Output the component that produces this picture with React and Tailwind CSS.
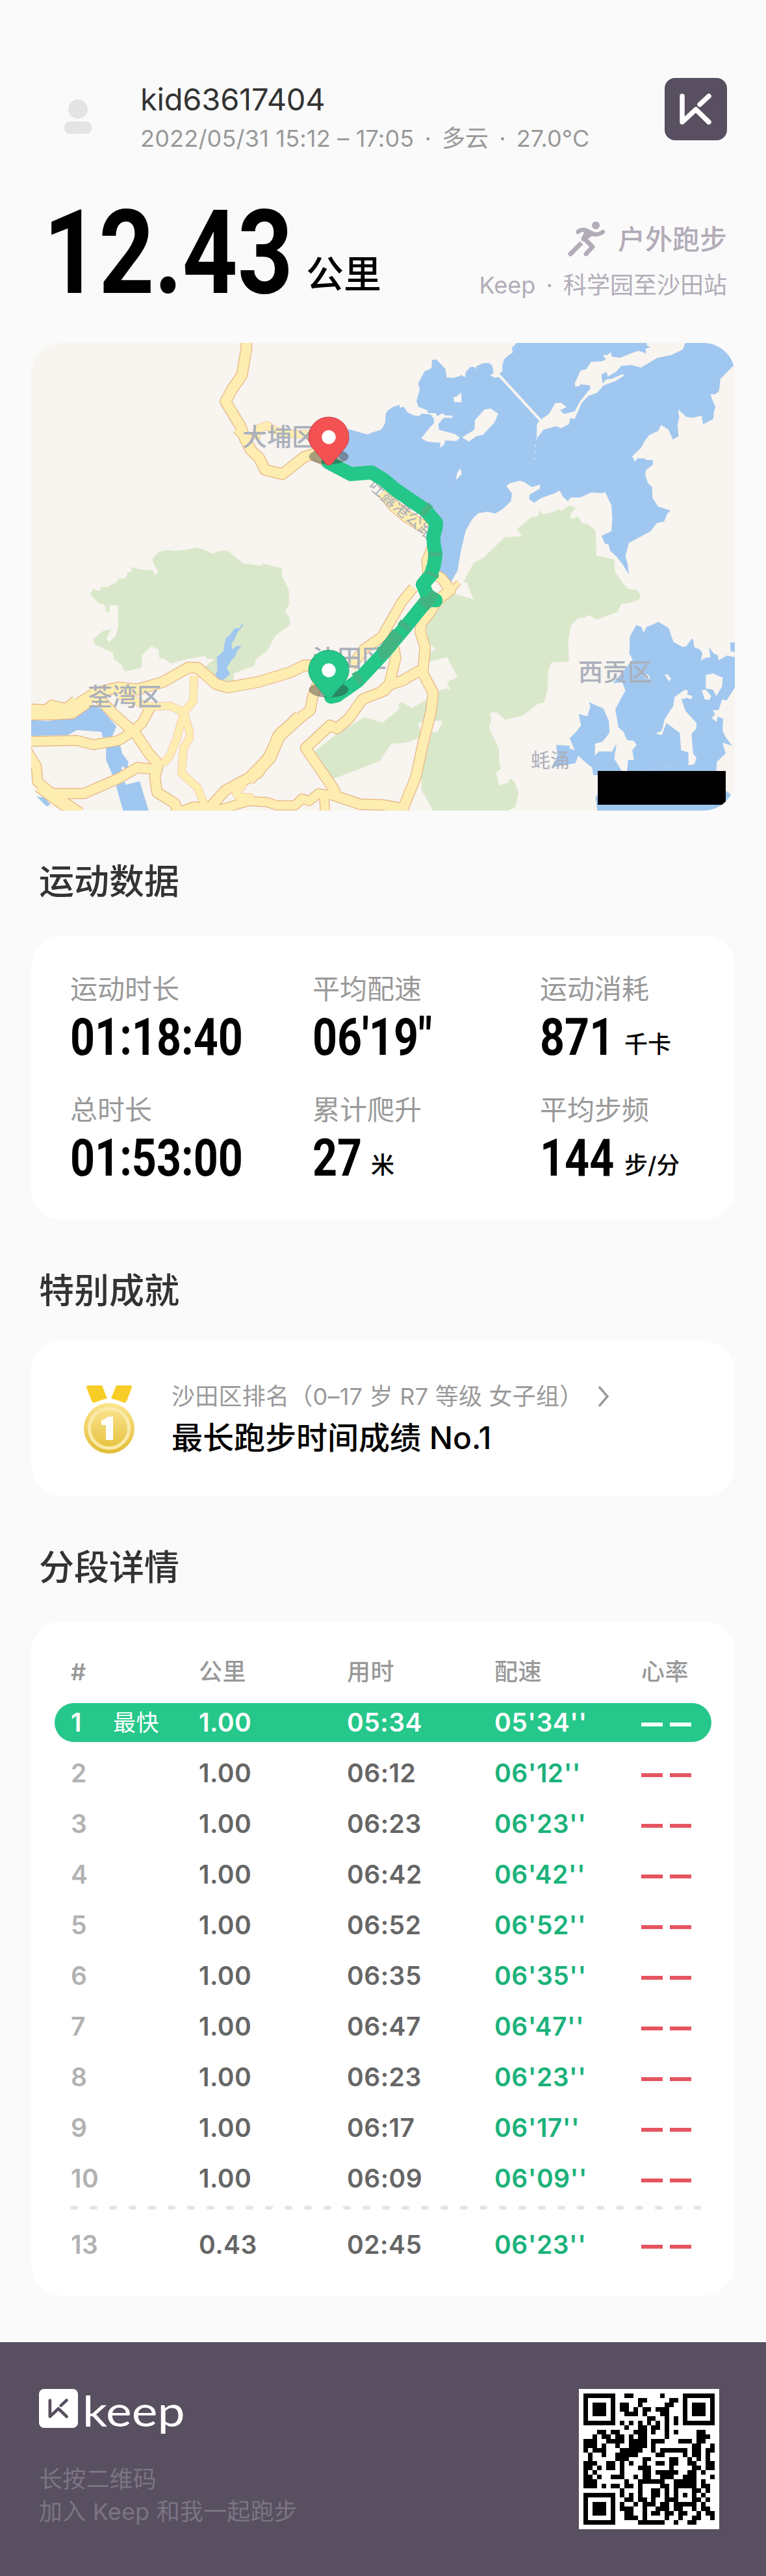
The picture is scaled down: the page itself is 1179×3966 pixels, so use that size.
const TILES = { a: [-8, -8], b: [542, -8], c: [-8, 352], d: [542, 352] };

// Converts sheet coordinates (one sheet per map quadrant) to a single path.
function trace(...parts) {
  const out = [];
  for (let i = 0; i < parts.length; i += 2) {
    const [ox, oy] = TILES[parts[i]];
    for (const pair of parts[i + 1].trim().split(/\s+/)) {
      const [x, y] = pair.split(",").map(Number);
      out.push(`${(ox + x / 2.8).toFixed(1)} ${(oy + y / 3).toFixed(1)}`);
    }
  }
  return "M" + out.join("L");
}

const WATER = [
  trace(
    "b", "570,20 570,30 555,45 557,70 540,80 520,100 513,130 513,155 500,165 508,180 480,185 460,172 475,165 470,130 455,116 430,118 400,132 398,147 393,135 375,135 355,160 352,182 335,172 328,178 300,185 273,183 268,145 228,100 210,103 208,140 178,155 150,210 157,240 143,290 150,318 190,335 192,348 225,348 232,362 255,348 265,358 298,360 298,370 260,370 237,400 240,425 310,445 330,462 315,477 265,475 262,495 243,508 247,485 190,480 163,465 200,415 218,395 218,375 205,355 165,350 155,362 130,358 105,345 88,318 70,324 70,310 40,320 20,335 10,350 8,390 0,410",
    "a", "1530,425 1500,435 1470,446 1390,422 1360,450 1340,520 1350,555 1400,600 1490,595",
    "b", "0,625 40,660 200,800 250,850 240,900 250,1000 235,1080 290,1132 320,1075 335,980 355,890 385,835 410,810 450,803 480,812 510,795 550,755 555,720 530,685 545,672 590,660 610,668 640,690 675,678 675,697 630,725 628,745 650,762 680,740 735,720 760,706 775,735 795,755 808,737 848,738 895,715 945,718 955,712 970,745 983,775 987,830 983,893 940,915 955,950 970,955 978,985 1005,1010 1030,1045 1058,1093 1052,1040 1043,1010 1058,948 1150,895 1180,855 1210,850 1222,815 1238,798 1185,780 1160,740 1158,690 1140,670 1128,630 1133,610 1163,585 1160,565 1135,565 1125,557 1095,557 1085,572 1072,548 1110,510 1125,480 1145,450 1185,430 1197,403 1230,425 1247,470 1272,455 1268,400 1275,370 1270,330 1305,365 1330,370 1372,360 1378,400 1422,375 1425,340 1432,320 1415,280 1410,260 1430,262 1447,245 1453,190 1508,130 1560,120 1560,10"
  ),
  trace("c", "932,238 935,250 912,280 900,310 885,335 890,360 905,345 930,343 905,375 905,388 885,410 865,445 880,475 845,503 812,490 825,455 822,395 850,370 860,310 880,290 900,262 920,262"),
  trace("c", "0,685 100,690 210,670 285,612 325,635 390,715 370,765 330,765 325,740 220,732 180,755 0,760"),
  trace("c", "345,800 405,800 415,840 442,880 435,920 420,900 410,905 415,925 372,938 345,870"),
  trace("c", "388,990 425,970 430,985 490,968 530,1110 420,1110"),
  trace("c", "45,1038 80,1045 105,1075 90,1085"),
  trace("d", "1090,247 1112,255 1122,283 1135,255 1160,245 1185,232 1230,262 1250,325 1290,348 1305,345 1328,312 1335,312 1340,350 1365,360 1375,380 1368,412 1385,400 1410,395 1403,348 1425,380 1440,385 1445,410 1480,388 1530,398 1530,510 1500,560 1480,595 1460,590 1445,640 1420,640 1430,660 1415,675 1435,695 1442,670 1465,680 1462,735 1475,765 1503,805 1462,790 1475,840 1437,880 1435,925 905,940 900,905 875,885 840,850 828,885 800,890 725,905 750,850 745,800 805,805 800,815 825,825 803,770 835,735 852,710 842,658 880,668 893,620 885,603 948,632 972,690 975,745 945,785 912,795 912,850 930,830 985,832 1005,795 995,865 1030,925 1050,920 1055,870 1080,870 1073,825 1092,800 1080,782 1050,778 1035,740 1013,720 1000,635 1043,550 1030,512 990,515 1030,465 1075,405 1060,380 1063,300"),
  trace("d", "1530,325 1495,328 1497,368 1530,375"),
  trace("d", "920,1030 915,1045 923,1110 1530,1110 1530,1040 1497,1030 1477,1012 1470,1070 930,1070"),
];

const PARKS = [
  trace(
    "a", "388,1140 400,1115 430,1110 437,1085 452,1080 458,1058 490,1070 545,1073 560,1098 570,1080 550,1045 545,1022 570,990 605,980 640,985 700,978 730,970 765,978 805,998 830,985 868,983 935,1042 1015,1053 1020,1042 1105,1067 1103,1100 1118,1130",
    "c", "1105,20 1132,85 1135,150 1115,185 1133,205 1140,245 1075,295 1040,365 990,405 985,435 895,470 895,505 845,508 812,480 770,440 812,405 780,402 770,390 690,405 625,425 600,405 575,400 572,360 540,345 500,385 498,443 425,462 410,430 380,405 375,375 300,340 288,315 330,275 368,265 345,310 358,325 385,300 397,260 397,155 360,155 360,188 345,185 340,155 310,145 277,103 290,80 315,90 325,70 350,72 388,50 400,15"
  ),
  trace(
    "b", "345,1130 365,1085 390,1040 430,1018 525,920 598,918 575,885 635,830 670,822 672,797 690,815 745,800 755,788 765,800 805,775 830,785 808,812 808,838 840,825 855,855 880,860 915,890 918,1005 995,1025 998,1080 1038,1140",
    "d", "1055,80 1090,85 1107,105 1103,130 1060,145 1025,150 1010,185 920,222 885,200 875,210 840,215 810,245 797,320 800,415 725,420 710,460 708,545 693,605 670,608 600,665 525,685 490,650 460,650 465,690 455,720 498,820 500,890 507,910 485,930 500,988 540,975 545,955 565,970 583,1020 570,1085 525,1110 215,1104 165,1010 165,930 210,742 235,742 255,690 220,690 240,550 250,545 270,540 290,545 273,510 320,490 275,395 200,415 200,370 225,362 220,350 190,330 185,240 230,160 300,100 388,128 360,50 345,50"
  ),
  trace(
    "d", "0,850 35,795 100,790 150,770 160,745 150,700 195,690 205,600 180,595 125,630 80,603 68,610 68,635 0,695",
    "c", "1540,698 1460,673 1350,740 1245,830 1325,958 1525,875"
  ),
];

const ISLANDS = [
  trace("b", "1135,20 1135,35 1152,45 1130,50 1132,72 1100,60 1060,75 1020,92 985,88 980,67 965,80 945,80 960,98 945,108 895,112 875,145 850,152 825,210 828,227 845,222 850,215 890,220 892,235 850,290 825,340 778,352 762,335 790,320 765,300 740,303 715,350 675,382 662,400 661,465 690,425 745,408 765,418 800,400 805,372 825,375 855,300 885,268 920,255 950,220 1000,200 1038,175 1030,168 985,190 960,192 945,212 940,170 962,157 968,180 1005,155 1025,130 1070,126 1110,138 1180,93 1240,80 1290,55 1303,20"),
  trace("b", "303,275 318,270 335,253 338,298 305,298"),
  trace("b", "395,380 435,332 462,326 495,350 480,390 430,448 400,455 368,480 340,460 392,425"),
  trace("b", "313,657 318,625 332,602 338,630"),
  trace("d", "1300,545 1312,550 1310,568 1333,575 1325,590 1310,583 1285,590 1303,645 1350,700 1348,725 1328,750 1335,840 1350,860 1340,890 1315,895 1315,835 1283,825 1278,745 1220,700 1200,755 1173,748 1200,735 1213,680 1250,620 1255,580 1280,560"),
  trace("d", "1390,478 1420,470 1463,490 1460,530 1435,575 1420,545 1390,540"),
  trace("d", "1372,548 1390,545 1413,575 1405,593 1385,590"),
  trace("d", "1213,475 1225,475 1240,495 1230,508"),
  trace("d", "1098,445 1120,465 1145,480 1150,495 1130,495"),
];

const MINOR = [
  trace("a", "990,470 1000,420 1040,405 1075,430 1140,445 1240,445"),
  trace("c", "725,480 720,600 680,650 650,770 620,850 590,890"),
  trace("c", "680,650 705,740 705,770 680,810 670,930 740,1000 770,1080"),
  trace("c", "400,570 480,600 520,625 620,620 690,655"),
  trace("c", "940,980 905,1020 915,1040 980,1045"),
];

const MAJOR = [
  [trace("a", "950,0 950,50 930,175 890,235 860,295 925,410 945,470 970,520 1005,555 1030,610 1105,630 1200,550 1245,535 1305,580"), 15.5],
  [trace("a", "910,420 960,470"), 15],
  [trace("c", "0,635 80,640 190,640 240,600 300,560 400,535 480,545 590,510 700,443 740,445 820,520 870,535 1000,510 1140,465 1200,433 1260,435"), 15.5],
  [trace("c", "22,665 110,665 200,660 280,600"), 12],
  [trace("c", "60,650 110,608 170,625 210,590"), 9],
  [trace("c", "0,785 220,780 290,800 400,780 450,745 500,700 545,610"), 14],
  [trace("c", "270,560 310,580 380,660 470,745 530,840 570,890 555,950 565,1020 640,1070 665,1130"), 15],
  [trace("c", "0,820 22,860 45,900 50,970 110,1025 250,1025 400,955 480,905 570,915"), 14.5],
  [trace("c", "60,990 120,1040 230,1120"), 19],
  [trace("c", "1260,510 1235,580 1225,640 1170,685 1100,740 1060,830 1000,930 930,970 860,1010 800,1080 780,1120"), 15],
  [trace("c", "1180,670 1090,760 1050,860 960,960"), 18],
  [trace("c", "660,1110 720,1085 840,1098 960,1060 1040,1065 1080,1080 1160,1080 1190,1048 1220,1060 1260,1025 1330,1035"), 13],
  [trace("c", "1285,1040 1290,1130"), 13],
  [trace("d", "45,350 53,400 35,480 25,525", "c", "1545,550 1450,590 1390,680 1340,725 1310,710 1205,815 1330,1010 1330,1035 1440,1075 1540,1078", "d", "0,1078 85,1095"), 15],
  [trace("d", "130,75 110,100 80,140 15,260 0,290", "c", "1540,295 1455,360 1400,440"), 14],
  [trace("d", "-20,565 20,525 80,505 160,455"), 15],
  [trace("d", "200,0 250,30 290,85 235,130 200,190 162,240 160,280 180,350 170,470 215,560 205,650 170,800 140,950 75,1120"), 15],
  [trace("d", "325,50 290,90 240,130"), 7],
  [trace("b", "0,710 40,770 100,825 185,880"), 17],
  [trace("b", "200,970 178,1030 185,1110"), 8],
];

const ROUTE = trace(
  "a", "1303,575 1400,630 1490,622",
  "b", "0,655 50,700 180,795 228,855 225,880 215,920 218,960 225,1000 218,1050 205,1095",
  "d", "170,60 190,110 225,133 190,130 100,250 0,378",
  "c", "1430,505 1340,572 1315,578"
);

const SHADES = [
  trace("b", "175,785 195,805"),
  trace("b", "222,990 222,1010"),
  trace("b", "214,1085 208,1100"),
  trace("d", "190,112 225,133"),
  trace("d", "195,130 170,160"),
  trace("d", "100,240 85,262"),
  trace("d", "65,285 0,375", "c", "1520,380"),
  trace("c", "1440,485 1420,500"),
];

function Pin({ y, color, edge }) {
  return (
    <g transform={`translate(458 ${y})`}>
      <ellipse cx="0" cy="30" rx="30.500" ry="12" fill="#333333" fillOpacity=".42" />
      <path d="M0 43C-3 43-5 41-7 38L-24 18C-29 12-31 6-31 0A31 31 0 0 1 31 0C31 6 29 12 24 18L7 38C5 41 3 43 0 43Z" fill={color} stroke={edge} strokeWidth="1" />
      <circle r="10.700" fill="#fff" />
    </g>
  );
}

function RouteMap() {
  return (
    <div className="relative mx-12 mt-[42px] h-[720px] overflow-hidden rounded-[48px] bg-[#f8f4ef]">
      <svg viewBox="0 0 1083 720" className="block h-full w-full" fill="none" strokeLinejoin="round">
        {PARKS.map((d) => <path key={d} d={d} fill="#d9e8ca" />)}
        {WATER.map((d) => <path key={d} d={d} fill="#a0c7f0" />)}
        {ISLANDS.map((d) => <path key={d} d={d} fill="#f8f4ef" />)}
        <path d={trace("b", "498,172 678,382")} stroke="#f8f4ef" strokeWidth="4" />
        <path d={trace("b", "660,465 650,566")} stroke="#f8f4ef" strokeWidth="1" strokeDasharray="3 7" />
        <path d={trace("d", "1130,918 1275,890")} stroke="#d8e4ee" strokeWidth="1" strokeDasharray="1 3" />
        {MINOR.map((d) => <path key={d} d={d} stroke="#f8cdb0" strokeWidth="13" />)}
        {MAJOR.map(([d, w]) => <path key={d} d={d} stroke="#e6b283" strokeWidth={w + 2.4} />)}
        {MINOR.map((d) => <path key={d} d={d} stroke="#fdedb1" strokeWidth="11" />)}
        {MAJOR.map(([d, w]) => <path key={d} d={d} stroke="#fdedb1" strokeWidth={w} />)}
        <g fill="#aab0bb" fontFamily="'Noto Sans CJK SC', sans-serif" fontSize="38" fontWeight="500">
          <text x="325" y="158">大埔区</text>
          <text x="433" y="499">沙田区</text>
          <text x="87" y="558">荃湾区</text>
          <text x="842" y="520">西贡区</text>
          <text x="769" y="653" fontSize="30" fontWeight="400">蚝涌</text>
          <text x="0" y="0" fontSize="25" fontWeight="400" transform="translate(518 222) rotate(41)">吐露港公路</text>
        </g>
        <path d={ROUTE} stroke="#24c789" strokeWidth="21.500" strokeLinecap="round" />
        {SHADES.map((d) => <path key={d} d={d} stroke="#42b482" strokeWidth="21" />)}
        <Pin y={145} color="#f45153" edge="#c8434a" />
        <Pin y={504} color="#24c789" edge="#22a374" />
      </svg>
      <div className="absolute top-[659px] left-[872px] h-[52px] w-[197px] bg-black" />
    </div>
  );
}

function KMark({ className }) {
  return (
    <svg viewBox="0 0 96 96" className={className} fill="none" stroke="currentColor" strokeWidth="7.500" strokeLinecap="round" strokeLinejoin="round">
      <path d="M27 28V68L48 48.500L68 68" />
      <path d="M68 28L54 41" />
    </svg>
  );
}

function Heading({ children, className }) {
  return <h2 className={`ml-[60px] h-20 pt-0.5 text-[54px] leading-[80px] font-medium text-[#333] ${className}`}>{children}</h2>;
}

const STATS = [
  ["运动时长", "01:18:40", "", ""],
  ["平均配速", "06'19\"", "", ""],
  ["运动消耗", "871", "千卡", "w-[118px]"],
  ["总时长", "01:53:00", "", ""],
  ["累计爬升", "27", "米", "w-[78px]"],
  ["平均步频", "144", "步/分", "w-[118px]"],
];

const SPLITS = [
  ["2", "1.00", "06:12", "06'12''"],
  ["3", "1.00", "06:23", "06'23''"],
  ["4", "1.00", "06:42", "06'42''"],
  ["5", "1.00", "06:52", "06'52''"],
  ["6", "1.00", "06:35", "06'35''"],
  ["7", "1.00", "06:47", "06'47''"],
  ["8", "1.00", "06:23", "06'23''"],
  ["9", "1.00", "06:17", "06'17''"],
  ["10", "1.00", "06:09", "06'09''"],
];

const GRID = "grid grid-cols-[197px_228px_227px_226px_1fr] items-center pl-[25px] tracking-[0.5px]";

function Dashes({ className }) {
  return (
    <span className={`flex gap-[11px] pt-1.5 ${className}`}>
      <i className="h-[6px] w-[33px] bg-current" />
      <i className="h-[6px] w-[33px] bg-current" />
    </span>
  );
}

function SplitRow({ row }) {
  return (
    <div className={`${GRID} h-[78px] text-[39px] font-semibold text-[#666]`}>
      <span className="text-[#b2b2b2]">{row[0]}</span>
      <span>{row[1]}</span>
      <span>{row[2]}</span>
      <span className="text-[#1bb27a]">{row[3]}</span>
      <Dashes className="text-[#e45560]" />
    </div>
  );
}

const QR = [
  "#######..##......#....#######",
  "#.....#.....##.....##.#.....#",
  "#.###.#.##..#.....##..#.###.#",
  "#.###.#.##.#.##.###...#.###.#",
  "#.###.#..###.#...##...#.###.#",
  "#.....#.......##..#.#.#.....#",
  "#######.#.#.#.#.#.#.#.#######",
  ".........#..##.##.#..........",
  "...##.##...###.#..#.#....##..",
  "..#.##.##.#.##....#......###.",
  "###..####.####.###...###.##..",
  "###.#..#..####.#........##..#",
  "#.###...#####..#.######.##.##",
  ".#..#..#####....##....#.##.#.",
  ".#.....###...##....##..#.#.#.",
  "###..##.#.#..#..##.##..##..##",
  "##.#.##.#...###....#....##.##",
  "#.#.....#....##.#####..##.#..",
  "##.#..###..#.##..###..###...#",
  "###......#..######..#####.#..",
  "###.#.##.##.#....##.#####.##.",
  "........#...#..##.#.#...##.#.",
  "#######.#.#.#..##.#.#.#.#.#..",
  "#.....#..##.##.#..###...##.#.",
  "#.###.#.#..#.###.##.#####.#..",
  "#.###.#.###..#..###.##..#.##.",
  "#.###.#..##..#.##.##.##..#.##",
  "#.....#..###.#....#..#..##..#",
  "#######.....######..#..##....",
];

function QrCode() {
  const d = QR.flatMap((r, y) => [...r].map((c, x) => (c === "#" ? `M${x} ${y}h1v1h-1z` : ""))).join("");
  return (
    <svg viewBox="-1.030 -1.030 31.060 31.060" className="h-[216px] w-[216px] bg-white" shapeRendering="crispEdges">
      <path d={d} fill="#000" />
      <path d="M0 22h7v7h-7zM1 23v5h5v-5zM2 24h3v3h-3z" fill="#000" fillRule="evenodd" />
    </svg>
  );
}

export default function App() {
  return (
    <div className="flex h-[3966px] w-[1179px] flex-col overflow-hidden bg-[#fafafa] font-['Inter','Noto_Sans_CJK_SC',sans-serif]">
      <header className="mt-[120px] flex h-24 pr-[60px] pl-[99px]">
        <svg viewBox="0 0 42 54" className="mt-[33px] h-[54px] w-[42px]" fill="#e4e4e4">
          <circle cx="21" cy="15" r="15" />
          <rect y="34" width="42" height="19" rx="8" />
        </svg>
        <div className="ml-[75px] flex-1 whitespace-nowrap">
          <p className="h-[66px] text-[47px] leading-[66px] tracking-[-0.2px] text-[#333]">kid63617404</p>
          <p className="h-[54px] text-[36px] leading-[54px] text-[#999]">
            <span className="tracking-[0.2px]">2022/05/31 15:12 – 17:05</span>
            <span className="mx-1.5"> · </span>多云<span className="mx-1.5"> · </span>27.0°C
          </p>
        </div>
        <div className="h-24 w-24 rounded-2xl bg-[#584f60] text-white">
          <KMark className="h-24 w-24" />
        </div>
      </header>

      <section className="mt-[90px] flex h-[180px] justify-between pr-[60px] pl-[67px]">
        <div className="flex">
          <div className="h-[180px] w-[404px]">
            <p className="w-max origin-left scale-x-[0.825] pt-0.5 font-['Roboto'] text-[180px] leading-[163px] font-bold text-black">12.43</p>
          </div>
          <p className="mt-[76px] text-[58px] leading-[80px] font-medium text-black">公里</p>
        </div>
        <div className="flex flex-col items-end text-[#b2acb8]">
          <div className="mt-[29px] flex h-[64px] items-center">
            <svg viewBox="0 0 80 70" className="mr-[6px] h-[70px] w-20" fill="none" stroke="currentColor" strokeLinecap="round" strokeLinejoin="round">
              <circle cx="52" cy="15" r="6" fill="currentColor" stroke="none" />
              <path d="M24.500 25Q29 21 35 22L40 24" strokeWidth="6.500" />
              <path d="M37 23L45 28L33 36L37 28Z" fill="currentColor" strokeWidth="7" />
              <path d="M44 26L50 29Q58 29 63 25" strokeWidth="6.500" />
              <path d="M36 37L47 48L37 59" strokeWidth="7" />
              <path d="M30 42L13 59" strokeWidth="7" strokeLinecap="butt" />
              <path d="M14 58L13 59" strokeWidth="7" />
            </svg>
            <span className="pt-1 text-[42px] leading-[60px] font-medium">户外跑步</span>
          </div>
          <p className="mt-[13px] text-[36px] leading-[54px]">Keep<span className="mx-1.5"> · </span>科学园至沙田站</p>
        </div>
      </section>

      <RouteMap />

      <Heading className="mt-[68px]">运动数据</Heading>
      <section className="mx-12 mt-[44px] grid h-[438px] grid-cols-[373px_350px_1fr] grid-rows-[186px_186px] rounded-[48px] bg-white pt-[53px] pl-[60px]">
        {STATS.map(([label, value, unit, w]) => (
          <div key={label}>
            <p className="h-[60px] text-[42px] leading-[60px] text-[#999]">{label}</p>
            <div className="flex h-[90px] whitespace-nowrap text-black">
              <div className={w}>
                <p className="w-max origin-left scale-x-[0.84] font-['Roboto'] text-[79px] leading-[89px] font-bold">{value}</p>
              </div>
              {unit && <span className="ml-3 mt-[28px] text-[36px] leading-[54px] font-medium">{unit}</span>}
            </div>
          </div>
        ))}
      </section>

      <Heading className="mt-[68px]">特别成就</Heading>
      <section className="mx-12 mt-[38px] flex h-[240px] rounded-[48px] bg-white pl-[62px]">
        <svg viewBox="0 0 120 130" className="mt-[56px] h-[130px] w-[120px]">
          <defs>
            <linearGradient id="gold" x2="0" y2="1">
              <stop stopColor="#fbe48d" />
              <stop offset="1" stopColor="#e3bd38" />
            </linearGradient>
            <linearGradient id="face" x2="0" y2="1">
              <stop stopColor="#fae28c" />
              <stop offset="1" stopColor="#e6c33f" />
            </linearGradient>
          </defs>
          <path d="M25 13H47L55 33Q43 36 34 40L31 37L23 16Q23 13 25 13Z" fill="#f8cd27" />
          <path d="M91 13H69L61 33Q73 36 82 40L85 37L93 16Q93 13 91 13Z" fill="#f8cd27" />
          <circle cx="58" cy="79" r="39" fill="url(#gold)" />
          <circle cx="58" cy="79" r="30.500" fill="url(#face)" stroke="#faeaaa" strokeWidth="5" />
          <path d="M55 61H64V97H53V74H46V66Q52 66 55 61Z" fill="#fff" />
        </svg>
        <div className="ml-[34px] pt-[59px] whitespace-nowrap">
          <div className="flex h-[54px] items-center text-[#999]">
            <span className="text-[36px] leading-[54px] tracking-[0.25px]">沙田区排名（0–17 岁 R7 等级 女子组）</span>
            <svg viewBox="0 0 18 32" className="ml-[22px] h-8 w-[18px]" fill="none" stroke="currentColor" strokeWidth="3.500"><path d="M2 1L15 16L2 31" /></svg>
          </div>
          <p className="mt-[3px] text-[48px] leading-[68px] font-medium text-black">最长跑步时间成绩 No.1</p>
        </div>
      </section>

      <Heading className="mt-[68px]">分段详情</Heading>
      <section className="mx-12 mt-[44px] h-[1038px] rounded-[48px] bg-white px-9 pt-[36px]">
        <div className={`${GRID} h-[84px] text-[36px] font-medium text-[#999]`}>
          <span className="font-semibold">#</span><span>公里</span><span>用时</span><span>配速</span><span>心率</span>
        </div>
        <div className={`${GRID} mt-[6px] mb-[9px] h-[60px] rounded-full bg-[#26c78a] text-[39px] font-semibold text-white`}>
          <span className="flex items-center">1<span className="ml-12 text-[35px] font-normal">最快</span></span>
          <span>1.00</span><span>05:34</span><span>05'34''</span>
          <Dashes className="text-white" />
        </div>
        {SPLITS.map((r) => <SplitRow key={r[0]} row={r} />)}
        <svg viewBox="0 0 971 6" className="mt-[3px] mb-[15px] ml-[24px] h-[6px] w-[971px]">
          <path d="M3 3H972" stroke="#e5e5e5" strokeWidth="6" strokeLinecap="round" strokeDasharray="6 24" />
        </svg>
        <SplitRow row={["13", "0.43", "02:45", "06'23''"]} />
      </section>

      <footer className="mt-[72px] flex h-[360px] justify-between bg-[#584f60] pt-[72px] pr-[72px] pl-[60px]">
        <div>
          <div className="flex h-[84px] text-white">
            <div className="h-[60px] w-[60px] rounded-lg bg-white text-[#584f60]"><KMark className="h-[60px] w-[60px]" /></div>
            <span className="ml-[7px] origin-left scale-x-[1.14] font-['Lato'] text-[66px] leading-[66px]">keep</span>
          </div>
          <p className="mt-[30px] text-[36px] leading-[50px] tracking-[0.2px] text-[#7b7483]">长按二维码<br />加入 Keep 和我一起跑步</p>
        </div>
        <QrCode />
      </footer>
    </div>
  );
}
